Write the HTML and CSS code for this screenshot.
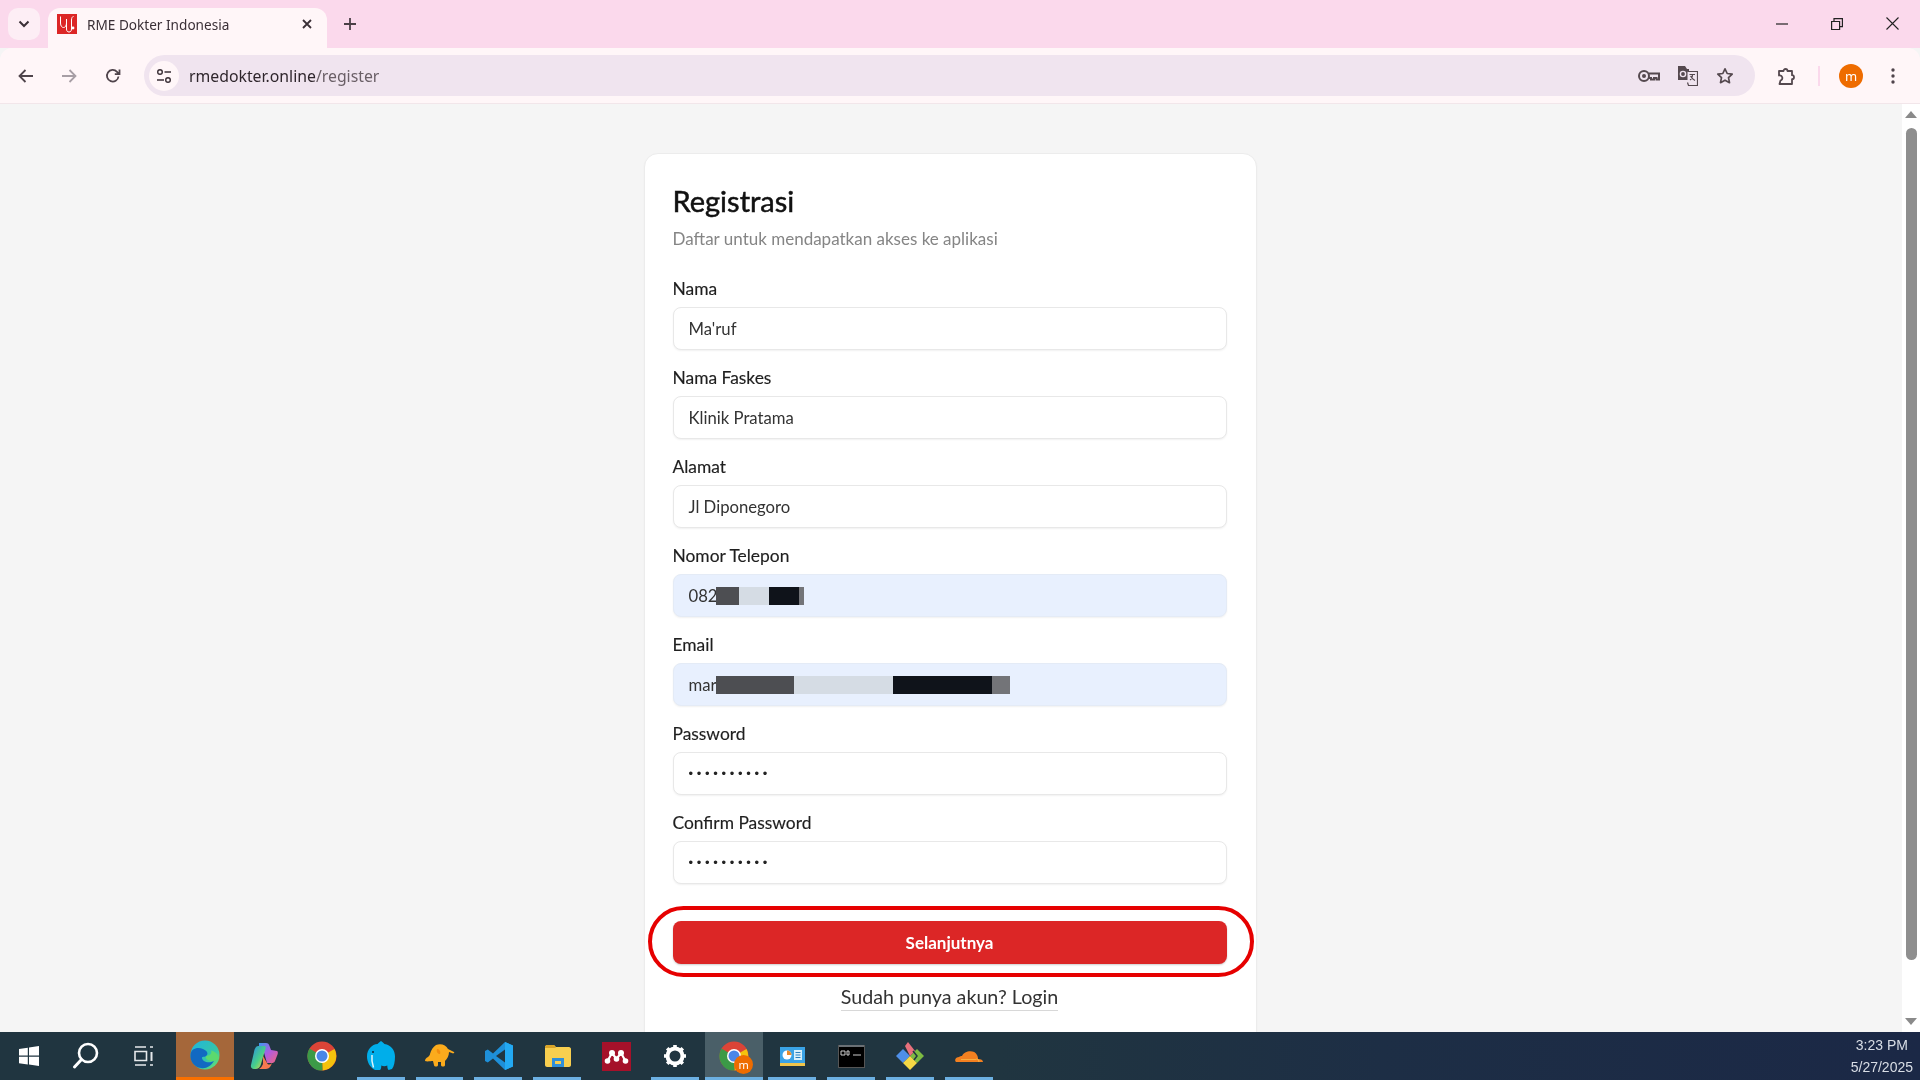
FILE: index.html
```html
<!DOCTYPE html>
<html lang="id">
<head>
<meta charset="utf-8">
<title>RME Dokter Indonesia</title>
<link rel="stylesheet" href="styles.css">
</head>
<body>
<div class="tabstrip">
  <div class="tabsearch"><svg width="12" height="8" viewBox="0 0 12 8"><path d="M1.500 1.500 6 6l4.500-4.500" fill="none" stroke="#3a2f36" stroke-width="2"/></svg></div>
  <div class="tab">
    <svg class="favicon" width="20" height="20" viewBox="0 0 20 20"><rect width="20" height="20" fill="#dc2626"/><path d="M3.500 2.500V9c0 3 1.500 4.500 3 4.500S9.500 12 9.500 9V5M9.500 9v6c0 2 1 3 2.500 3s2.500-1 2.500-3V6c0-2 .8-3.500 2-3.500" fill="none" stroke="#fff" stroke-width="1"/><circle cx="16" cy="14" r="1.400" fill="#fff"/></svg>
    <span class="tabtitle">RME Dokter Indonesia</span>
    <svg class="tabclose" width="10" height="10" viewBox="0 0 10 10"><path d="M1 1l8 8M9 1 1 9" stroke="#3a2f36" stroke-width="1.800"/></svg>
  </div>
  <svg class="newtab" width="14" height="14" viewBox="0 0 14 14"><path d="M7 1v12M1 7h12" stroke="#4a3f46" stroke-width="1.800"/></svg>
  <div class="wincontrols">
    <svg width="12" height="12" viewBox="0 0 12 12"><path d="M0 6h12" stroke="#222" stroke-width="1.200"/></svg>
    <svg width="12" height="12" viewBox="0 0 12 12"><path d="M.6 3.500h8v8h-8zM3 3.500V.6h8.400v8H8.600" fill="none" stroke="#222" stroke-width="1.200"/></svg>
    <svg width="13" height="13" viewBox="0 0 13 13"><path d="M.5.500l12 12M12.500.500l-12 12" stroke="#222" stroke-width="1.100"/></svg>
  </div>
</div>

<div class="toolbar">
  <svg class="navicon" width="16" height="14" viewBox="0 0 16 14"><path d="M15 7H2M7.500 1 1.500 7l6 6" fill="none" stroke="#4f444b" stroke-width="1.800"/></svg>
  <svg class="navicon" width="16" height="14" viewBox="0 0 16 14"><path d="M1 7h13M8.500 1l6 6-6 6" fill="none" stroke="#a79ea5" stroke-width="1.800"/></svg>
  <svg class="navicon" width="16" height="16" viewBox="0 0 16 16"><path d="M13.500 8.500A5.800 5.800 0 1 1 12 3.800L14 6M14.500 1.500V6.200H9.800" fill="none" stroke="#4f444b" stroke-width="1.800"/></svg>
  <div class="omnibox">
    <div class="sitechip"><svg width="16" height="16" viewBox="0 0 16 16"><circle cx="4" cy="4" r="2.300" fill="none" stroke="#3a2f36" stroke-width="1.400"/><circle cx="12" cy="12" r="2.300" fill="none" stroke="#3a2f36" stroke-width="1.400"/><path d="M8.500 4H15M1 12h7" stroke="#3a2f36" stroke-width="1.400"/></svg></div>
    <span class="url">rmedokter.online<span class="urlpath">/register</span></span>
    <span class="spacer"></span>
    <svg class="omniicon" width="22" height="14" viewBox="0 0 22 14"><circle cx="6" cy="7" r="5" fill="none" stroke="#55494f" stroke-width="2"/><circle cx="6" cy="7" r="2" fill="#55494f"/><path d="M11 4.500h10v6h-2.500V9H16v1.500h-3V9h-2" fill="none" stroke="#55494f" stroke-width="2"/></svg>
    <svg class="omniicon" width="20" height="20" viewBox="0 0 20 20"><path d="M0 0h7l2 3h2v11H0z" fill="#55494f"/><path d="M9.500 5.500h10v14H10.500l-1-3" fill="#f0e4ef" stroke="#55494f" stroke-width="1.200"/><circle cx="5" cy="8" r="2.600" fill="none" stroke="#f0e4ef" stroke-width="1.400"/><path d="M11.500 8.500H17M14.500 8.500c0 3-1 4.500-2.500 5.500M12.500 10c1 2 2.500 3.500 4.500 4.500" stroke="#55494f" stroke-width="1.100" fill="none"/></svg>
    <svg class="omniicon" width="18" height="18" viewBox="0 0 18 18"><path d="M9 1.800l2.200 4.700 5 .6-3.700 3.500 1 5.100L9 13.200l-4.500 2.500 1-5.100L1.800 7.100l5-.6z" fill="none" stroke="#55494f" stroke-width="1.700" stroke-linejoin="round"/></svg>
  </div>
  <svg class="extensions" width="20" height="20" viewBox="0 0 20 20"><path d="M2 5h4.500a2 2 0 0 1 4 0H15v4.200a2 2 0 0 1 0 4V18H2.500l1-3.500a2.500 2.500 0 0 0-1.500-5z" fill="none" stroke="#55494f" stroke-width="1.800" stroke-linejoin="round"/></svg>
  <div class="tooldivider"></div>
  <div class="avatar">m</div>
  <svg class="kebab" width="4" height="16" viewBox="0 0 4 16"><circle cx="2" cy="2" r="1.700" fill="#4f444b"/><circle cx="2" cy="8" r="1.700" fill="#4f444b"/><circle cx="2" cy="14" r="1.700" fill="#4f444b"/></svg>
</div>

<div class="viewport">
  <main class="page">
    <div class="card">
      <h1 class="title">Registrasi</h1>
      <p class="subtitle">Daftar untuk mendapatkan akses ke aplikasi</p>
      <div class="field"><div class="label">Nama</div><div class="input">Ma'ruf</div></div>
      <div class="field"><div class="label">Nama Faskes</div><div class="input">Klinik Pratama</div></div>
      <div class="field"><div class="label">Alamat</div><div class="input">Jl Diponegoro</div></div>
      <div class="field"><div class="label">Nomor Telepon</div>
        <div class="input autofill"><span class="shown">082</span><i class="red dark w23"></i><i class="red light w30"></i><i class="red black w30"></i><i class="red grey w5"></i></div></div>
      <div class="field"><div class="label">Email</div>
        <div class="input autofill"><span class="shown">mar</span><i class="red dark w78"></i><i class="red light w99"></i><i class="red black w99"></i><i class="red grey w18"></i></div></div>
      <div class="field"><div class="label">Password</div><div class="input dots">••••••••••</div></div>
      <div class="field"><div class="label">Confirm Password</div><div class="input dots">••••••••••</div></div>
      <div class="submitwrap">
        <button class="submit">Selanjutnya</button>
        <div class="ring"></div>
      </div>
      <div class="loginrow"><a class="login">Sudah punya akun? Login</a></div>
    </div>
  </main>
  <div class="scrollbar">
    <svg width="12" height="7" viewBox="0 0 12 7"><path d="M6 0l6 7H0z" fill="#8a8a8a"/></svg>
    <div class="thumb"></div>
    <svg width="12" height="7" viewBox="0 0 12 7"><path d="M6 7 0 0h12z" fill="#8a8a8a"/></svg>
  </div>
</div>

<footer class="taskbar">
  <div class="tb sys"><svg width="20" height="20" viewBox="0 0 20 20"><path d="M0 3l8.800-1.300v7.800H0zM10 1.500 20 0v9.500H10zM0 10.700h8.800v7.800L0 17.200zM10 10.700h10V20l-10-1.500z" fill="#fff"/></svg></div>
  <div class="tb sys"><svg width="28" height="28" viewBox="0 0 28 28"><circle cx="16" cy="11" r="9" fill="none" stroke="#fff" stroke-width="2.600"/><path d="M9.500 17.500 2.500 25" stroke="#fff" stroke-width="3" stroke-linecap="round"/></svg></div>
  <div class="tb sys"><svg width="20" height="20" viewBox="0 0 20 20"><path d="M1 1h11M1 19h11M1 5.500h11.500v9H1zM16 1h3M16 19h3" fill="none" stroke="#e6e9eb" stroke-width="1.600"/><path d="M17.500 6v9" stroke="#e6e9eb" stroke-width="2"/></svg></div>
  <div class="tb app edge"><svg width="30" height="30" viewBox="0 0 30 30"><defs><linearGradient id="eg" x1="0" y1="0" x2="1" y2="1"><stop offset="0" stop-color="#1fb4e0"/><stop offset=".6" stop-color="#35c6a8"/><stop offset="1" stop-color="#6ee36a"/></linearGradient></defs><circle cx="15" cy="15" r="14.500" fill="url(#eg)"/><path d="M.5 15C1 8 8 7 13 9c4 1.500 6 5 3 7-2 1.500-4 0-4 2 0 3 6 6 12 3-3 5-8 8-13 7C4 27 0 21 .5 15z" fill="#1269c2"/><path d="M29 18c-1 3-7 4-11 2-3-1.500-3-4 0-4.500 3-.5 4-3 3-5 3 .5 7 3 8 7.500z" fill="#5cd96e"/></svg></div>
  <div class="tb app"><svg width="28" height="28" viewBox="0 0 28 28"><defs><linearGradient id="cp1" x1="0" y1="0" x2="1" y2="1"><stop offset="0" stop-color="#2a8be8"/><stop offset=".55" stop-color="#47d08a"/><stop offset="1" stop-color="#ffd23c"/></linearGradient><linearGradient id="cp2" x1="0" y1="0" x2="1" y2="1"><stop offset="0" stop-color="#3a9af0"/><stop offset=".5" stop-color="#b05ce0"/><stop offset="1" stop-color="#f2667a"/></linearGradient></defs><path d="M9 1h7c2 0 3 1 3.500 3L21 8l6 1c1 .2 1 2 .7 3L25 19c-.5 1.500-2 2-3 2h-5L13 7c-.5-2-2-3-4-3z" fill="url(#cp2)"/><path d="M8 4h6c1.500 0 2 1 1.500 2.500L11 22c-.5 2-2 5-5 5H4C1.500 27 .5 25 1 23L4 10C4.500 7 6 4 8 4z" fill="url(#cp1)"/><path d="M13 14l4 7c1 2 3 2 5 0-1 3-3 6-6 6H9c2-1 3-3 4-5z" fill="#f5794f"/></svg></div>
  <div class="tb app"><svg width="30" height="30" viewBox="0 0 30 30"><circle cx="15" cy="15" r="14.500" fill="#db4437"/><path d="M15 15 27.500 8a14.500 14.500 0 0 1-12 21.500z" fill="#f4c20d"/><path d="M15 15 2.500 7.500A14.500 14.500 0 0 0 15.500 29.500z" fill="#3c9a47"/><circle cx="15" cy="15" r="7" fill="#fff"/><circle cx="15" cy="15" r="5.500" fill="#4a86e8"/></svg></div>
  <div class="tb app run"><svg width="28" height="30" viewBox="0 0 28 30"><path d="M14 0c1.500 1 2.500 2 3.500 3C24 4 28 9 28 15.500c0 5-1 10-3 12.500l-3.500 1c-1-1-1.200-3-1.200-4.500-2 1-4 1-6 0 0 2-.3 3.500-1.300 4.500H8C3 26.500 0 21 0 15.500 0 8 5 3.500 10.500 3c1-1 2-2 3.500-3z" fill="#00aeea"/><path d="M5 14c-.5 4 0 8 1.500 12.500" fill="none" stroke="#dff4fb" stroke-width="1.500"/><circle cx="6" cy="11" r="1" fill="#123"/></svg></div>
  <div class="tb app run"><svg width="30" height="24" viewBox="0 0 30 24"><path d="M11 1c5-2 10 0 12 4l6 3c1 1-1 2-2 1l-3-1c0 4-2 7-4 9v4c0 2-4 2-4 0v-3h-3v3c0 2-4 2-4 0l-1-4c-2 0-6 1-8 0 0-2 1-3 3-4 1-1 2-2 2-3 1-4 3-7 6-9z" fill="#fbab1c"/><path d="M12 5c2 0 4 2 3 5-2 0-4-2-3-5z" fill="#f28c0f"/></svg></div>
  <div class="tb app run"><svg width="28" height="28" viewBox="0 0 28 28"><path d="M20 0 28 3.500v21L20 28 8 16.500 2.800 20.500 0 19v-10l2.800-1.500L8 11.500z" fill="#1e8fd8"/><path d="M20 7.500 11 14l9 6.500z" fill="#203540"/><path d="M20 0 28 3.500v21L20 28z" fill="#23a9f2"/></svg></div>
  <div class="tb app run"><svg width="26" height="22" viewBox="0 0 26 22"><path d="M0 2c0-1 1-2 2-2h7l2 2h13c1 0 2 1 2 2v16c0 1-1 2-2 2H2c-1 0-2-1-2-2z" fill="#f8cf4f"/><path d="M0 2c0-1 1-2 2-2h7l2 3H0z" fill="#d9a429"/><path d="M7 13h12v9H7z" fill="#2f8fd8"/><path d="M10 16h6v3h-6z" fill="#f8cf4f"/></svg></div>
  <div class="tb app"><svg width="29" height="29" viewBox="0 0 29 29"><rect width="29" height="29" fill="#a5112a"/><g fill="#fff"><circle cx="5.500" cy="19" r="2.800"/><circle cx="14.500" cy="17" r="2.800"/><circle cx="23.500" cy="19" r="2.800"/><circle cx="10" cy="11" r="3"/><circle cx="19" cy="11" r="3"/></g><path d="M5.500 19 10 11l4.500 6L19 11l4.500 8" fill="none" stroke="#fff" stroke-width="2.200"/></svg></div>
  <div class="tb app run"><svg width="22" height="22" viewBox="0 0 22 22"><path d="M11 3.500a7.500 7.500 0 1 0 0 15 7.500 7.500 0 0 0 0-15z" fill="none" stroke="#fff" stroke-width="4"/><path d="M11 0v4M11 18v4M0 11h4M18 11h4M3.200 3.200 6 6M16 16l2.800 2.800M18.800 3.200 16 6M6 16l-2.800 2.800" stroke="#fff" stroke-width="3.600"/></svg></div>
  <div class="tb app run active"><div class="chromebadge"><svg width="30" height="30" viewBox="0 0 30 30"><circle cx="15" cy="15" r="14.500" fill="#db4437"/><path d="M15 15 27.500 8a14.500 14.500 0 0 1-12 21.500z" fill="#f4c20d"/><path d="M15 15 2.500 7.500A14.500 14.500 0 0 0 15.500 29.500z" fill="#3c9a47"/><circle cx="15" cy="15" r="7" fill="#fff"/><circle cx="15" cy="15" r="5.500" fill="#4a86e8"/></svg><span class="badge">m</span></div></div>
  <div class="tb app run"><svg width="25" height="19" viewBox="0 0 25 19"><rect width="25" height="19" fill="#3aa3e6"/><path d="M0 16h25v3H0z" fill="#f0c54a"/><circle cx="7" cy="8" r="4.500" fill="#fff"/><path d="M7 8V3.500A4.500 4.500 0 0 1 11.500 8z" fill="#e88b2c"/><path d="M14 3h8v10h-8z" fill="#d8f0fb"/><path d="M15.500 5.500h5M15.500 8h5M15.500 10.500h5" stroke="#2a80c0"/></svg></div>
  <div class="tb app run"><svg width="27" height="23" viewBox="0 0 27 23"><rect width="27" height="23" fill="#000"/><path d="M0 0h27v2H0z" fill="#6a7075"/><path d="M.5 0v23M26.500 0v23M0 22.500h27" stroke="#555"/><path d="M3 6h4v4H3zM9 6h2v4H9zM15 10h8" stroke="#ccc" fill="none"/></svg></div>
  <div class="tb app run"><svg width="30" height="30" viewBox="0 0 30 30"><path d="M15 15 8 8 1 15l7 7z" fill="#4e8fe8"/><path d="M15 15l7-7 7 7-7 7z" fill="#7dbb42"/><path d="M15 15l-7 7 7 7 7-7z" fill="#f6d945"/><path d="M15 15 10 5l3-4 7 9z" fill="#e8707c"/><path d="M18 10l4 5-3 4" stroke="#203540" stroke-width="1.500" fill="none"/></svg></div>
  <div class="tb app run"><svg width="30" height="14" viewBox="0 0 30 14"><path d="M2 13c-2-2 0-5 3-5 1-1 2-1 3-1 2-5 12-7 15-1 1 2 1 3 1 4 3 0 5 1 5 3z" fill="#f38020"/><path d="M7 10.500h15M25 13c0-2-1-3-3-3" stroke="#faad3f" stroke-width="1.200" fill="none"/></svg></div>
  <div class="clock"><div>3:23 PM</div><div>5/27/2025</div></div>
</footer>
</body>
</html>
```

FILE: styles.css
```css
* { box-sizing: border-box; }
html, body { margin: 0; height: 100%; }
body {
  width: 1920px;
  height: 1080px;
  overflow: hidden;
  display: flex;
  flex-direction: column;
  font-family: "Lato", "Liberation Sans", sans-serif;
  background: #f5f5f5;
  filter: blur(0.4px);
}

/* browser chrome */
.tabstrip {
  height: 48px;
  flex: none;
  background: #fbd9ec;
  display: flex;
  align-items: flex-start;
  padding-left: 8px;
}
.tabsearch {
  width: 32px;
  height: 32px;
  margin-top: 8px;
  border-radius: 10px;
  background: #fdeef5;
  display: flex;
  align-items: center;
  justify-content: center;
}
.tab {
  width: 279px;
  height: 40px;
  margin: 8px 0 0 8px;
  background: #fff6f8;
  border-radius: 12px 12px 0 0;
  display: flex;
  align-items: center;
  padding: 0 15px 8px 9px;
}
.favicon { flex: none; }
.tabtitle {
  margin-left: 10px;
  font-family: "Noto Sans", sans-serif;
  font-size: 13.600px;
  color: #3a2f36;
  flex: 1;
}
.newtab { margin: 17px 0 0 16px; }
.wincontrols {
  margin: 17px 21px 0 auto;
  display: flex;
  align-items: center;
  gap: 43px;
}
.toolbar {
  height: 56px;
  flex: none;
  background: #fff6f8;
  border-bottom: 1px solid #f2e6ea;
  border-radius: 12px 12px 0 0;
  display: flex;
  align-items: center;
  padding: 1px 0 0 18px;
}
.navicon { margin-right: 27px; }
.navicon:nth-child(3) { margin-right: 0; margin-left: 1px; }
.omnibox {
  width: 1611px;
  height: 41px;
  margin: -1px 0 0 23px;
  background: #f0e4ef;
  border-radius: 21px;
  display: flex;
  align-items: center;
  padding-left: 5px;
}
.sitechip {
  width: 30px;
  height: 30px;
  border-radius: 50%;
  background: #fff6f8;
  display: flex;
  align-items: center;
  justify-content: center;
}
.url {
  margin-left: 10px;
  font-family: "Noto Sans", sans-serif;
  font-size: 15.800px;
  color: #2f262c;
}
.urlpath { color: #6a5f66; }
.spacer { flex: 1; }
.omniicon { margin-right: 18px; }
.omniicon:last-child { margin-right: 21px; }
.extensions { margin-left: 22px; }
.tooldivider {
  width: 2px;
  height: 20px;
  margin-left: 21px;
  background: #fbd9ec;
}
.avatar {
  width: 24px;
  height: 24px;
  margin-left: 19px;
  border-radius: 50%;
  background: #ee6c00;
  color: #fff;
  font-size: 13px;
  display: flex;
  align-items: center;
  justify-content: center;
  font-family: "Noto Sans", sans-serif;
}
.kebab { margin-left: 28px; }

/* page */
.viewport {
  flex: 1;
  min-height: 0;
  display: flex;
  overflow: hidden;
}
.page {
  flex: 1;
  min-width: 0;
  background: #f5f5f5;
  padding-top: 49px;
  display: flex;
  justify-content: center;
  padding-right: 2px;
}
.card {
  width: 613px;
  height: 1000px;
  flex: none;
  background: #fff;
  border: 1px solid #ececec;
  border-radius: 14px;
  padding: 27px 29px 0 28px;
  box-shadow: 0 1px 2px rgba(0, 0, 0, .04);
}
.title {
  margin: 0;
  font-size: 29px;
  line-height: 40px;
  font-weight: 400;
  -webkit-text-stroke: .5px #111;
  color: #111;
}
.subtitle {
  margin: 6px 0 26px;
  font-size: 17px;
  line-height: 24px;
  color: #858585;
}
.field { height: 89px; }
.label {
  font-size: 17.400px;
  line-height: 23px;
  color: #1f1f1f;
  -webkit-text-stroke: .15px #1f1f1f;
  margin-bottom: 7px;
}
.input {
  height: 43px;
  border: 1px solid #e8e8e8;
  border-radius: 8px;
  background: #fff;
  padding: 0 15px;
  display: flex;
  align-items: center;
  font-size: 16.700px;
  color: #333;
  box-shadow: 0 1px 2px rgba(0, 0, 0, .06);
}
.autofill { background: #e8f0fe; border-color: #e4ebf6; }
.shown { width: 27px; flex: none; }
.red { display: block; height: 18px; flex: none; }
.dark { background: #4d4e52; }
.light { background: #d5dce4; }
.black { background: #0f131a; }
.grey { background: #737478; }
.w5 { width: 5px; }
.w18 { width: 18px; }
.w23 { width: 23px; }
.w30 { width: 30px; }
.w78 { width: 78px; }
.w99 { width: 99px; }
.dots {
  font-family: "Liberation Sans", sans-serif;
  font-size: 13px;
  letter-spacing: 3.700px;
  color: #222;
}
.submitwrap { position: relative; margin-top: 21px; }
.submit {
  display: block;
  width: 100%;
  height: 43px;
  border: 0;
  border-radius: 8px;
  background: #dc2626;
  color: #fff;
  font-family: inherit;
  font-size: 17px;
  font-weight: 700;
  box-shadow: 0 1px 2px rgba(0, 0, 0, .2);
}
.ring {
  position: absolute;
  left: -25px;
  right: -27px;
  top: -15px;
  bottom: -13px;
  border: 4px solid #e60000;
  border-radius: 36px;
}
.loginrow { margin-top: 20px; text-align: center; }
.login {
  font-size: 19.700px;
  line-height: 26px;
  color: #333;
  border-bottom: 1px solid #d8d8d8;
  display: inline-block;
}
.scrollbar {
  width: 18px;
  flex: none;
  background: #fff;
  padding: 7px 0 7px;
  display: flex;
  flex-direction: column;
  align-items: center;
}
.thumb {
  width: 11px;
  height: 832px;
  margin: 10px 0 auto;
  border-radius: 6px;
  background: #8e8e8e;
}

/* taskbar */
.taskbar {
  height: 48px;
  flex: none;
  background: linear-gradient(to right, #203540 0%, #203540 52%, #1d2e45 72%, #1b2846 100%);
  display: flex;
  align-items: stretch;
}
.tb {
  flex: none;
  display: flex;
  align-items: center;
  justify-content: center;
  position: relative;
}
.sys { width: 57.500px; }
.app { width: 58.800px; }
.edge { margin-left: 3px; background: #a5673a; border-bottom: 3px solid #f97000; }
.run::after {
  content: "";
  position: absolute;
  left: 5px;
  right: 6px;
  bottom: 0;
  height: 3px;
  background: #6cb0e2;
}
.active { background: #4a5f68; }
.active::after { left: 0; right: 0; }
.chromebadge { position: relative; width: 30px; height: 30px; }
.badge {
  position: absolute;
  right: -4px;
  bottom: -3px;
  width: 19px;
  height: 19px;
  border-radius: 50%;
  background: #ee6c00;
  color: #fff;
  font-family: "Noto Sans", sans-serif;
  font-size: 11px;
  display: flex;
  align-items: center;
  justify-content: center;
}
.clock {
  margin-left: auto;
  padding: 2px 7px 0 0;
  text-align: center;
  font-family: "Liberation Sans", sans-serif;
  font-size: 14px;
  line-height: 22px;
  color: #d8dde5;
}
```
